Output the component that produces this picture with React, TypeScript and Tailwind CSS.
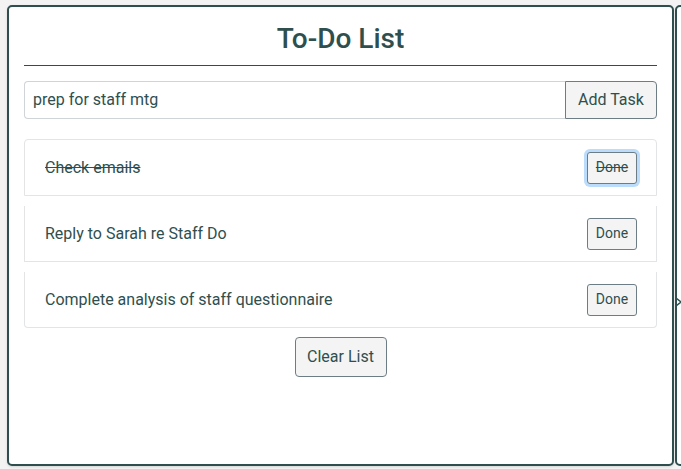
import React, { useState } from 'react';

type Task = { id: number; text: string; done: boolean };

const INITIAL_TASKS: Task[] = [
  { id: 1, text: 'Check emails', done: true },
  { id: 2, text: 'Reply to Sarah re Staff Do', done: false },
  { id: 3, text: 'Complete analysis of staff questionnaire', done: false },
];

export default function App() {
  const [tasks, setTasks] = useState<Task[]>(INITIAL_TASKS);
  const [newTask, setNewTask] = useState('prep for staff mtg');

  const addTask = () => {
    if (!newTask.trim()) return;
    setTasks(prev => [...prev, { id: Date.now(), text: newTask.trim(), done: false }]);
    setNewTask('');
  };

  const toggleDone = (id: number) => {
    setTasks(prev => prev.map(t => (t.id === id ? { ...t, done: !t.done } : t)));
  };

  return (
    <div className="w-[681px] h-[469px] overflow-hidden bg-[#f3f3f3] font-['Roboto',sans-serif] text-[#2f4f4f]">
      <div className="flex gap-[1px] pl-[7px] pt-[5px]">
        <div className="w-[667px] h-[461px] shrink-0 bg-white border-2 border-[#2f4f4f] rounded-[5px] px-[15px] shadow-sm">
          <h1 className="h-[59px] pt-[16px] text-center text-[28px] leading-[32px] font-medium border-b border-[#2f4f4f]">
            To-Do List
          </h1>

          <div className="flex mt-[15px] h-[38px]">
            <input
              type="text"
              value={newTask}
              onChange={e => setNewTask(e.target.value)}
              className="flex-1 min-w-0 border border-[#d0d4d7] border-r-0 rounded-l-[4px] px-[8px] text-[16px] text-[#2f4f4f] outline-none"
            />
            <button
              onClick={addTask}
              className="w-[92px] bg-[#f4f4f4] border border-[#6c7d86] rounded-r-[4px] text-[16px] text-[#2f4f4f]"
            >
              Add Task
            </button>
          </div>

          <ul className="mt-[20px] flex flex-col gap-[10px]">
            {tasks.map((task, i) => (
              <li
                key={task.id}
                className={`flex items-center justify-between pl-[20px] pr-[19px] border-x border-b border-[#e2e4e6] ${
                  i === 0 ? 'h-[57px] border-t rounded-t-[4px]' : 'h-[56px]'
                } ${i === tasks.length - 1 ? 'rounded-b-[4px]' : ''}`}
              >
                <span className={`text-[16px] ${task.done ? 'line-through' : ''}`}>{task.text}</span>
                <button
                  onClick={() => toggleDone(task.id)}
                  className={`w-[50px] h-[32px] bg-[#f4f4f4] border border-[#6c7d86] rounded-[3px] text-[14px] text-[#2f4f4f] ${
                    task.done ? 'line-through ring-[3px] ring-[#bcdcfc]' : ''
                  }`}
                >
                  Done
                </button>
              </li>
            ))}
          </ul>

          <div className="flex justify-center mt-[9px]">
            <button
              onClick={() => setTasks([])}
              className="w-[92px] h-[40px] bg-[#f4f4f4] border border-[#6c7d86] rounded-[4px] text-[16px] text-[#2f4f4f]"
            >
              Clear List
            </button>
          </div>
        </div>

        <div className="relative w-[667px] h-[461px] shrink-0 bg-white border-2 border-[#2f4f4f] rounded-[5px]">
          <svg className="absolute left-[-1px] top-[290px]" width="6" height="10" viewBox="0 0 6 10">
            <path d="M0 1 L5 5 L0 9" fill="none" stroke="#2f4f4f" strokeWidth="1.5" />
          </svg>
        </div>
      </div>
    </div>
  );
}
